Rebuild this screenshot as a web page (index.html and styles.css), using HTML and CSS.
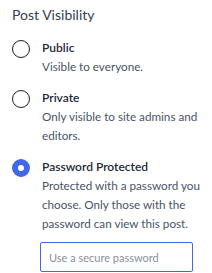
FILE: index.html
```html
<!DOCTYPE html>
<html lang="en">

<head>
    <meta charset="UTF-8">
    <meta name="viewport" content="width=device-width, initial-scale=1.0">
    <title>Post Visibility</title>
    <link rel="stylesheet" href="styles.css">
</head>

<body>
    <div class="panel">
        <div class="title">Post Visibility</div>

        <label class="option">
            <input type="radio" name="visibility" value="public">
            <span class="option-text">
                <span class="option-label">Public</span>
                <span class="option-desc">Visible to everyone.</span>
            </span>
        </label>

        <label class="option">
            <input type="radio" name="visibility" value="private">
            <span class="option-text">
                <span class="option-label">Private</span>
                <span class="option-desc">Only visible to site admins and editors.</span>
            </span>
        </label>

        <label class="option">
            <input type="radio" name="visibility" value="password" checked>
            <span class="option-text">
                <span class="option-label">Password Protected</span>
                <span class="option-desc">Protected with a password you choose. Only those with the password can view this post.</span>
            </span>
        </label>

        <div class="password-field">
            <input type="text" class="password-input" placeholder="Use a secure password">
        </div>
    </div>
</body>

</html>
```

FILE: styles.css
```css
body {
    margin: 0;
    background-color: #ffffff;
    font-family: Lato, sans-serif;
    font-size: 12px;
    color: #344054;
}

.panel {
    padding: 5px 4px 0 12px;
}

.title {
    font-size: 14px;
    line-height: 20px;
    color: #344054;
    margin-bottom: 14px;
}

.option {
    display: flex;
    align-items: flex-start;
    gap: 12px;
    margin-bottom: 13px;
    cursor: pointer;
}

.option input[type="radio"] {
    appearance: none;
    -webkit-appearance: none;
    flex: none;
    width: 18px;
    height: 18px;
    margin: 1px 0 0 0;
    border: 1.5px solid #1e1e1e;
    border-radius: 50%;
    background-color: #fff;
    box-sizing: border-box;
}

.option input[type="radio"]:checked {
    border: 6px solid #4467e6;
}

.option-text {
    display: flex;
    flex-direction: column;
}

.option-label {
    font-size: 12px;
    font-weight: 600;
    line-height: 18px;
    color: #1d2939;
}

.option-desc {
    font-size: 11.7px;
    line-height: 19px;
    color: #475467;
}

.password-field {
    padding-left: 28px;
    margin-top: -4px;
}

.password-input {
    width: 153px;
    height: 30px;
    box-sizing: border-box;
    padding: 0 8px;
    border: 1.5px solid #4467e6;
    border-radius: 2px;
    font-family: inherit;
    font-size: 11px;
    color: #1d2939;
    outline: none;
}

.password-input::placeholder {
    color: #8a8f98;
}
```
